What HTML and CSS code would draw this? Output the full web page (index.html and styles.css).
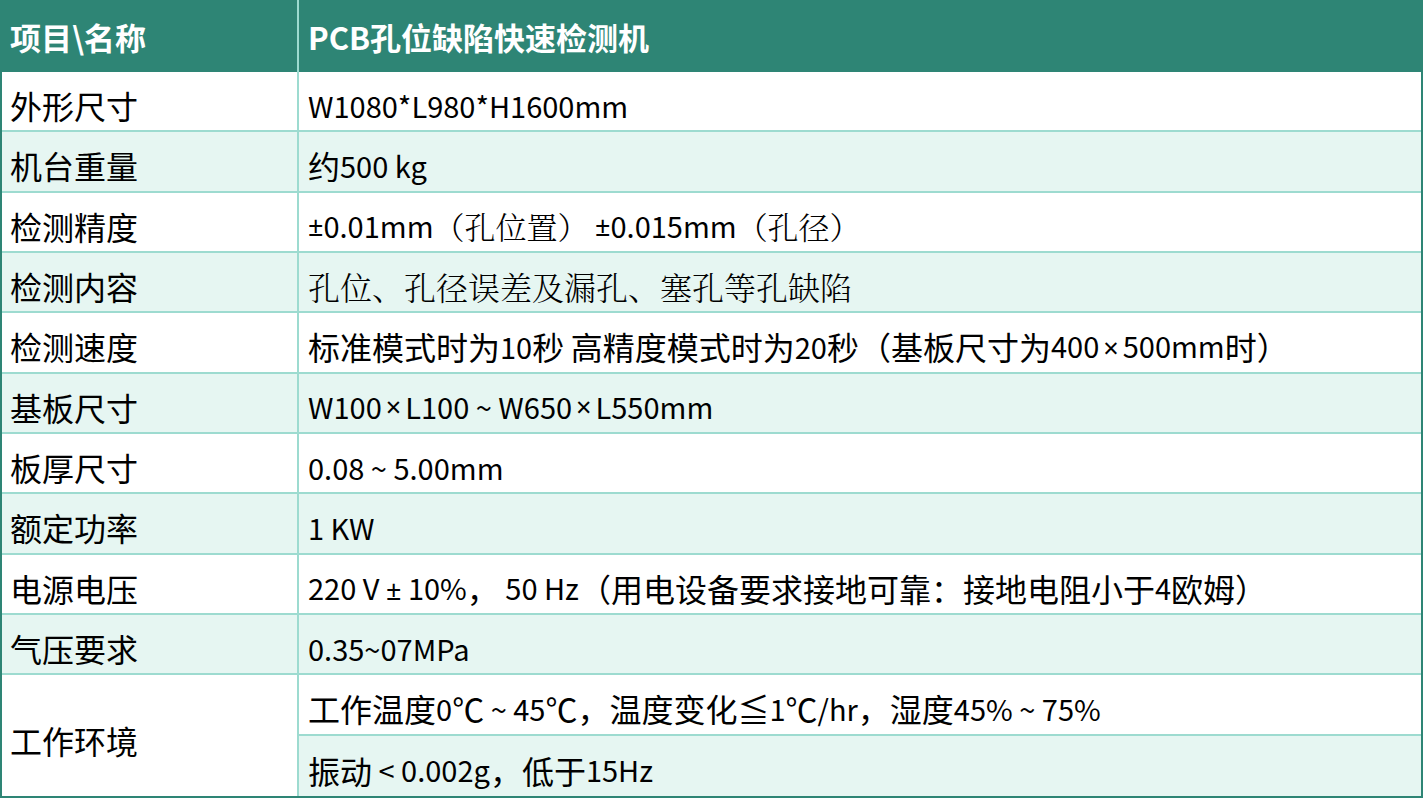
FILE: index.html
```html
<!DOCTYPE html>
<html lang="zh-CN">
<head>
<meta charset="utf-8">
<title>PCB孔位缺陷快速检测机</title>
<link rel="stylesheet" href="styles.css">
</head>
<body>
<div class="spec">
  <div class="cell head key">项目\名称</div>
  <div class="cell head val">PCB孔位缺陷快速检测机</div>

  <div class="cell key">外形尺寸</div>
  <div class="cell val latin">W1080*L980*H1600mm</div>

  <div class="cell key alt">机台重量</div>
  <div class="cell val alt">约<span class="lt">500 kg</span></div>

  <div class="cell key">检测精度</div>
  <div class="cell val latin"><span class="sym">±</span>0.01mm<span class="serif">（孔位置）</span>&nbsp;<span class="sym">±</span>0.015mm<span class="serif">（孔径）</span></div>

  <div class="cell key alt">检测内容</div>
  <div class="cell val alt serif big">孔位、孔径误差及漏孔、塞孔等孔缺陷</div>

  <div class="cell key">检测速度</div>
  <div class="cell val">标准模式时为<span class="lt">10</span>秒<span class="lt">&nbsp;</span>高精度模式时为<span class="lt">20</span>秒（基板尺寸为<span class="lt">400<span class="sym times">×</span>500mm</span>时）</div>

  <div class="cell key alt">基板尺寸</div>
  <div class="cell val alt latin">W100<span class="sym times">×</span>L100 ~ W650<span class="sym times">×</span>L550mm</div>

  <div class="cell key">板厚尺寸</div>
  <div class="cell val latin">0.08 ~ 5.00mm</div>

  <div class="cell key alt">额定功率</div>
  <div class="cell val alt latin">1 KW</div>

  <div class="cell key">电源电压</div>
  <div class="cell val"><span class="lt">220 V <span class="sym">±</span> 10%</span>，<span class="lt">&nbsp;50 Hz</span>（用电设备要求接地可靠：接地电阻小于<span class="lt">4</span>欧姆）</div>

  <div class="cell key alt">气压要求</div>
  <div class="cell val alt latin">0.35~07MPa</div>

  <div class="cell key span2 last">工作环境</div>
  <div class="cell val">工作温度<span class="lt">0</span>℃<span class="lt">&nbsp;~ 45</span>℃，温度变化≦<span class="lt">1</span>℃<span class="lt">/hr</span>，湿度<span class="lt">45% ~ 75%</span></div>
  <div class="cell val alt last">振动<span class="lt">&nbsp;&lt; 0.002g</span>，低于<span class="lt">15Hz</span></div>
</div>
</body>
</html>
```

FILE: styles.css
```css
html, body {
  margin: 0;
  padding: 0;
  background: #ffffff;
}

.spec {
  box-sizing: border-box;
  width: 1423px;
  height: 798px;
  display: grid;
  grid-template-columns: 297px 1fr;
  grid-template-rows: 72px repeat(12, 1fr);
  border: 2px solid #2e8575;
  border-top: 0;
  font-family: "Noto Sans CJK SC", "Noto Sans", sans-serif;
  color: #000000;
}

.cell {
  box-sizing: border-box;
  display: flex;
  align-items: center;
  padding-left: 8px;
  padding-top: 8px;
  font-size: 32px;
  line-height: 1;
  white-space: nowrap;
  background: #ffffff;
  border-bottom: 2px solid #9ddbd0;
}

.key {
  border-right: 2px solid #9ddbd0;
}

.val {
  padding-left: 9px;
}

.latin,
.lt {
  font-size: 29px;
}

.sym {
  font-family: "Noto Sans", sans-serif;
  font-size: 27px;
}

.times {
  margin: 0 4px;
}

.alt {
  background: #e6f6f2;
}

.head {
  background: #2e8575;
  color: #ffffff;
  font-weight: 700;
  font-size: 31px;
  padding-top: 0;
  border-bottom: 0;
}

.span2 {
  grid-row: span 2;
}

.last {
  border-bottom: 0;
}

.serif {
  font-family: "Noto Serif CJK SC", "Noto Sans CJK SC", serif;
  font-weight: 300;
  font-size: 31px;
}

.serif.big {
  font-size: 32px;
}
```
